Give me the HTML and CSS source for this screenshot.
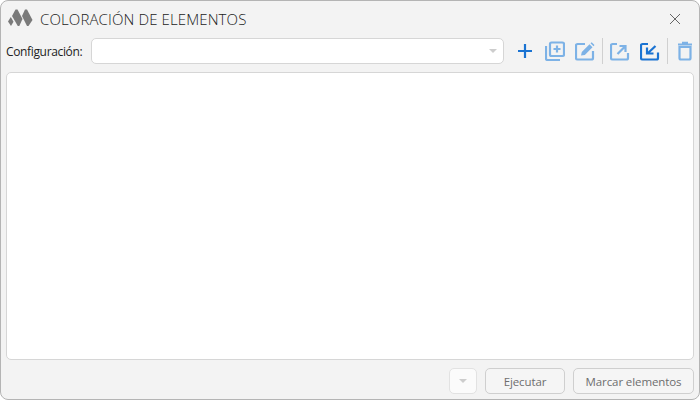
FILE: index.html
```html
<!DOCTYPE html>
<html lang="es">
<head>
<meta charset="utf-8">
<title>Coloración de elementos</title>
<link rel="stylesheet" href="styles.css">
</head>
<body>
<div class="window">
  <header class="titlebar">
    <svg class="logo" width="26" height="18" viewBox="0 0 26 18"><path class="logo-a" d="M3.800 8 L6.500 12.700 L4 17 L1 12.500 Z"/><path class="logo-a" d="M8.500 0.500 L10.500 0.500 L15.500 10 L12.300 17 L10.800 17 L5 7 Z"/><path class="logo-a" d="M18 0.500 L20 0.500 L25.500 11 L21.500 17 L20 17 L15 7 Z"/></svg>
    <h1 class="title">COLORACIÓN DE ELEMENTOS</h1>
    <svg class="close" width="12" height="12" viewBox="0 0 12 12"><path d="M1 1 L11 11 M11 1 L1 11"/></svg>
  </header>
  <div class="toolbar">
    <label class="label">Configuración:</label>
    <div class="combo"><span class="caret"></span></div>
    <div class="tools">
      <button class="tool"><svg width="20" height="20" viewBox="0 0 20 20"><path class="s-strong" d="M10 3 V17 M3 10 H17"/></svg></button>
      <button class="tool"><svg width="20" height="20" viewBox="0 0 20 20"><g class="s-soft"><rect x="5" y="1.500" width="14" height="13.500" rx="1.500"/><path d="M1 5 V17.500 Q1 19 2.500 19 H15"/><path d="M12 4.500 V11.500 M8.500 8 H15.500"/></g></svg></button>
      <button class="tool"><svg width="20" height="20" viewBox="0 0 20 20"><path class="s-soft" d="M10 3 H2.500 Q1 3 1 4.500 V17 Q1 18.500 2.500 18.500 H16.500 Q18 18.500 18 17 V10"/><path class="f-soft" d="M6 14.500 L6.800 11 L14.500 3.300 L17.500 6.300 L9.800 14 Z M15.500 2.300 L16.700 1.200 L19.500 4 L18.500 5.300 Z"/></svg></button>
      <span class="sep"></span>
      <button class="tool"><svg width="20" height="20" viewBox="0 0 20 20"><g class="s-soft"><path d="M7 3 H2.500 Q1 3 1 4.500 V17 Q1 18.500 2.500 18.500 H16.500 Q18 18.500 18 17 V12"/><path d="M7.500 13 L15 5.500 M9.500 5 H15.500 V11"/></g></svg></button>
      <button class="tool"><svg width="20" height="20" viewBox="0 0 20 20"><g class="s-strong"><path d="M8 3 H2.500 Q1 3 1 4.500 V17 Q1 18.500 2.500 18.500 H16.500 Q18 18.500 18 17 V11.500"/><path d="M15.500 5 L7.500 12.500 M7 6.500 V12.500 H13.500"/></g></svg></button>
      <span class="sep"></span>
      <button class="tool"><svg width="20" height="20" viewBox="0 0 20 20"><g class="s-soft"><path d="M4.500 6 V17 Q4.500 18.500 6 18.500 H14 Q15.500 18.500 15.500 17 V6 Z"/><path d="M3 3.500 H17 M7 1.800 H13"/></g></svg></button>
    </div>
  </div>
  <main class="panel"></main>
  <footer class="footer">
    <button class="btn btn-drop"><span class="caret"></span></button>
    <button class="btn btn-run">Ejecutar</button>
    <button class="btn btn-mark">Marcar elementos</button>
  </footer>
</div>
</body>
</html>
```
FILE: styles.css
```css
* { box-sizing: border-box; }
html, body { margin: 0; height: 100%; background: #fff; }
body { font-family: "Open Sans", "Noto Sans", sans-serif; }
.window {
  width: 700px; height: 400px;
  display: flex; flex-direction: column;
  background: #f3f3f3;
  border: 1px solid #b4b4b4;
  border-radius: 8px;
  padding: 0 5px 5px;
}
.titlebar { height: 36px; display: flex; align-items: center; flex: none; }
.logo { margin: 0 0 2px 1px; flex: none; }
.logo-a { fill: #7a7a7a; }
.title {
  margin: 0 0 0 7px; flex: 1;
  font-size: 15px; font-weight: 300; color: #222;
  letter-spacing: 0.12px;
}
.close { margin-right: 13px; flex: none; }
.close path { stroke: #666; stroke-width: 1; fill: none; }
.toolbar { height: 26px; margin-top: 1px; display: flex; align-items: center; flex: none; }
.label { font-size: 12px; color: #222; width: 85px; letter-spacing: -0.35px; flex: none; }
.combo {
  width: 413px; height: 26px; flex: none;
  background: #fff; border: 1px solid #d6d6d6; border-radius: 5px;
  display: flex; align-items: center; justify-content: flex-end; padding-right: 6px;
}
.caret {
  display: block; width: 0; height: 0;
  border-left: 4px solid transparent; border-right: 4px solid transparent;
  border-top: 4px solid #cdcdcd;
}
.tools { display: flex; align-items: center; margin-left: 11px; height: 26px; }
.tool {
  width: 20px; height: 20px; padding: 0; border: 0; background: none;
  display: block; flex: none; margin-right: 10px;
}
.tool svg { display: block; }
.s-strong { stroke: #1a73d2; stroke-width: 2.2; fill: none; }
.s-soft { stroke: #7db2e6; stroke-width: 2.2; fill: none; }
.f-soft { fill: #7db2e6; }
.sep { width: 1px; height: 26px; background: #d0d0d0; margin: 0 7px 0 -3px; flex: none; }
.panel {
  flex: 1; margin-top: 8px;
  background: #fff; border: 1px solid #d6d6d6; border-radius: 5px;
}
.footer { height: 26px; margin-top: 8px; display: flex; justify-content: flex-end; gap: 8px; flex: none; }
.btn {
  height: 26px; padding: 0;
  font-family: inherit; font-size: 11.5px; color: #6e6e6e; letter-spacing: -0.1px;
  background: #f5f5f5; border: 1px solid #cfcfcf; border-radius: 5px;
}
.btn-drop { width: 28px; background: #fbfbfb; border-color: #e2e2e2; display: flex; align-items: center; justify-content: center; }
.btn-run { width: 80px; }
.btn-mark { width: 121px; }
```
